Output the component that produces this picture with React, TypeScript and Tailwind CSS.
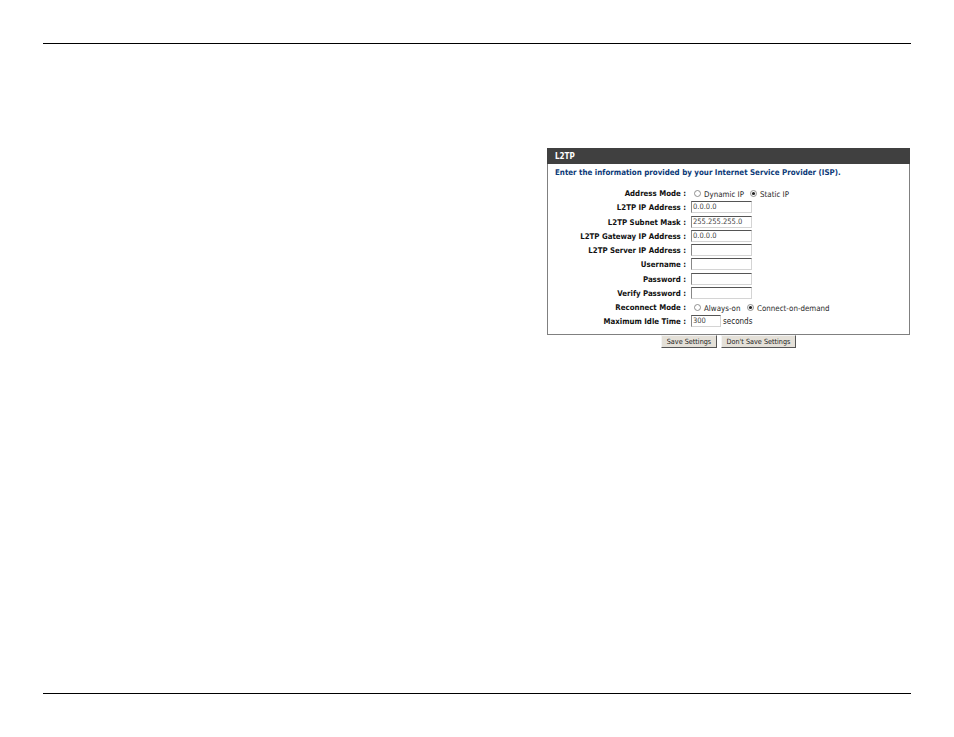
import React from 'react';

type Row =
  | { label: string; kind: 'input'; value?: string; width?: string; suffix?: string }
  | { label: string; kind: 'radio'; options: { text: string; checked?: boolean; slot: string }[] };

const rows: Row[] = [
  {
    label: 'Address Mode :',
    kind: 'radio',
    options: [
      { text: 'Dynamic IP', slot: 'w-[56px]' },
      { text: 'Static IP', checked: true, slot: 'w-auto' },
    ],
  },
  { label: 'L2TP IP Address :', kind: 'input', value: '0.0.0.0' },
  { label: 'L2TP Subnet Mask :', kind: 'input', value: '255.255.255.0' },
  { label: 'L2TP Gateway IP Address :', kind: 'input', value: '0.0.0.0' },
  { label: 'L2TP Server IP Address :', kind: 'input' },
  { label: 'Username :', kind: 'input' },
  { label: 'Password :', kind: 'input' },
  { label: 'Verify Password :', kind: 'input' },
  {
    label: 'Reconnect Mode :',
    kind: 'radio',
    options: [
      { text: 'Always-on', slot: 'w-[53px]' },
      { text: 'Connect-on-demand', checked: true, slot: 'w-auto' },
    ],
  },
  { label: 'Maximum Idle Time :', kind: 'input', value: '300', width: 'w-[30px]', suffix: 'seconds' },
];

const Radio = ({ checked }: { checked?: boolean }) => (
  <svg width="7" height="7" viewBox="0 0 7 7" className="shrink-0 -mt-[3px]">
    <circle cx="3.5" cy="3.5" r="3" fill="#fff" stroke="#777" strokeWidth="0.8" />
    {checked && <circle cx="3.5" cy="3.5" r="1.6" fill="#222" />}
  </svg>
);

const Button = ({ children, width }: { children: React.ReactNode; width: string }) => (
  <div
    className={`${width} shrink-0 h-[13px] flex items-center justify-center bg-[#e4e0d8] border border-t-[#f4f4f4] border-l-[#f4f4f4] border-r-[#555] border-b-[#555] text-[7.2px] text-[#222] leading-none whitespace-nowrap`}
  >
    {children}
  </div>
);

export default function App() {
  return (
    <div className="w-[954px] h-[737px] bg-white flex flex-col justify-between pt-[43px] pb-[43px] px-[43px] overflow-hidden font-['DejaVu_Sans',sans-serif] [font-stretch:condensed]">
      <div>
        <div className="h-px bg-black" />

        {/* L2TP panel */}
        <div className="mt-[104px] ml-[504px] w-[363px] h-[187px] border border-[#808080] border-t-0 bg-white">
          <div className="h-[16px] -mx-px bg-[#404040] text-white text-[8px] font-bold leading-[17px] pl-[8px]">
            L2TP
          </div>
          <p className="ml-[7px] mt-[3px] text-[7.9px] font-bold leading-[11px] text-[#0c3a78] whitespace-nowrap">
            Enter the information provided by your Internet Service Provider (ISP).
          </p>

          <div className="mt-[9px] flex flex-col">
            {rows.map((row) => (
              <div key={row.label} className="h-[14.25px] flex items-center">
                <div className="w-[138px] shrink-0 text-right text-[7.8px] font-bold text-[#111] leading-none whitespace-nowrap">
                  {row.label}
                </div>
                {row.kind === 'input' ? (
                  <div className="flex items-center ml-[5px]">
                    <div
                      className={`${row.width ?? 'w-[61px]'} h-[12px] -mt-[2px] border border-[#d4d4d4] border-t-[#555] border-l-[#888] pl-[1px] text-[7.5px] leading-[10px] text-[#444]`}
                    >
                      {row.value}
                    </div>
                    {row.suffix && <span className="ml-[2px] text-[8px] text-[#222] leading-none">{row.suffix}</span>}
                  </div>
                ) : (
                  <div className="flex items-center ml-[8px]">
                    {row.options.map((opt) => (
                      <div key={opt.text} className={`${opt.slot} flex items-center gap-[3px] pt-[1px]`}>
                        <Radio checked={opt.checked} />
                        <span className="mt-[1px] text-[7.9px] text-[#2a2a2a] leading-none whitespace-nowrap">{opt.text}</span>
                      </div>
                    ))}
                  </div>
                )}
              </div>
            ))}
          </div>
        </div>

        <div className="ml-[618px] flex gap-[4px]">
          <Button width="w-[56px]">Save Settings</Button>
          <Button width="w-[75px]">Don't Save Settings</Button>
        </div>
      </div>

      <div className="h-px bg-black" />
    </div>
  );
}
